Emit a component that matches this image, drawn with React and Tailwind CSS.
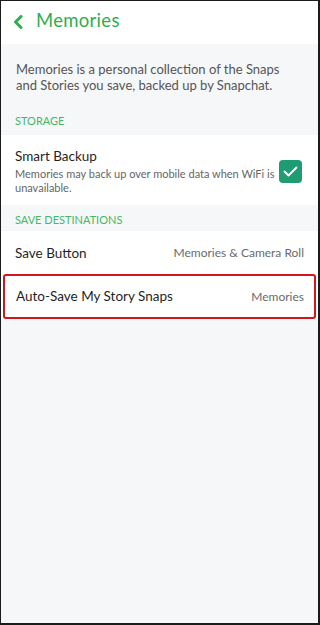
import React from "react";

const font = { fontFamily: "Lato, 'Noto Sans', sans-serif" };

const App = () => {
  return (
    <div
      className="w-[320px] h-[625px] bg-[#1b1b1b] pt-px pl-px pr-[2px] pb-[2px]"
      style={font}
    >
      <div className="w-full h-full flex flex-col bg-[#f6f7f9]">
        <header className="h-[43px] bg-white flex items-center pl-[12px] gap-[13px]">
          <svg width="10" height="14" viewBox="0 0 10 14" className="-mt-[2px]">
            <polyline
              points="8,1.5 2.5,7 8,12.5"
              fill="none"
              stroke="#2fae4d"
              strokeWidth="3"
              strokeLinecap="round"
              strokeLinejoin="round"
            />
          </svg>
          <span className="text-[18.5px] text-[#2fae4d] tracking-[0.3px] -mt-[3px]">Memories</span>
        </header>

        <p className="pt-[17px] pl-[15px] pr-[20px] text-[13px] leading-[16px] text-[#555]">
          Memories is a personal collection of the Snaps and Stories you save, backed up by Snapchat.
        </p>

        <div className="pt-[22px] pb-[8px] pl-[14px] text-[11px] leading-[12px] text-[#45b865]">
          STORAGE
        </div>

        <div className="bg-white flex items-center pl-[14px] pr-[16px] pt-[12px] pb-[10px]">
          <div className="w-[262px] flex-none">
            <div className="text-[13.5px] leading-[18px] text-[#1f1f1f] mb-[2px]">Smart Backup</div>
            <div className="text-[11px] leading-[14px] text-[#666]">
              Memories may back up over mobile data when WiFi is unavailable.
            </div>
          </div>
          <div className="w-[23px] h-[23px] rounded-[4px] bg-[#1f9c74] flex items-center justify-center ml-auto">
            <svg width="15" height="11" viewBox="0 0 15 11">
              <polyline
                points="1.5,5.5 5.5,9.5 13.5,1.5"
                fill="none"
                stroke="white"
                strokeWidth="1.8"
                strokeLinecap="round"
                strokeLinejoin="round"
              />
            </svg>
          </div>
        </div>

        <div className="pt-[9px] pb-[5px] pl-[14px] text-[11px] leading-[12px] text-[#45b865]">
          SAVE DESTINATIONS
        </div>

        <div className="bg-white">
          <div className="flex items-center justify-between h-[44px] pl-[14px] pr-[14px]">
            <span className="text-[13.5px] text-[#1f1f1f]">Save Button</span>
            <span className="text-[12px] text-[#6b6b6b]">Memories &amp; Camera Roll</span>
          </div>
          <div className="mx-[2px] border-2 border-[#d3161e] rounded-[3px] -mt-px">
            <div className="flex items-center justify-between h-[41px] pl-[11px] pr-[10px]">
              <span className="text-[13.5px] text-[#1f1f1f]">Auto-Save My Story Snaps</span>
              <span className="text-[12px] text-[#6b6b6b]">Memories</span>
            </div>
          </div>
        </div>
      </div>
    </div>
  );
};

export default App;
